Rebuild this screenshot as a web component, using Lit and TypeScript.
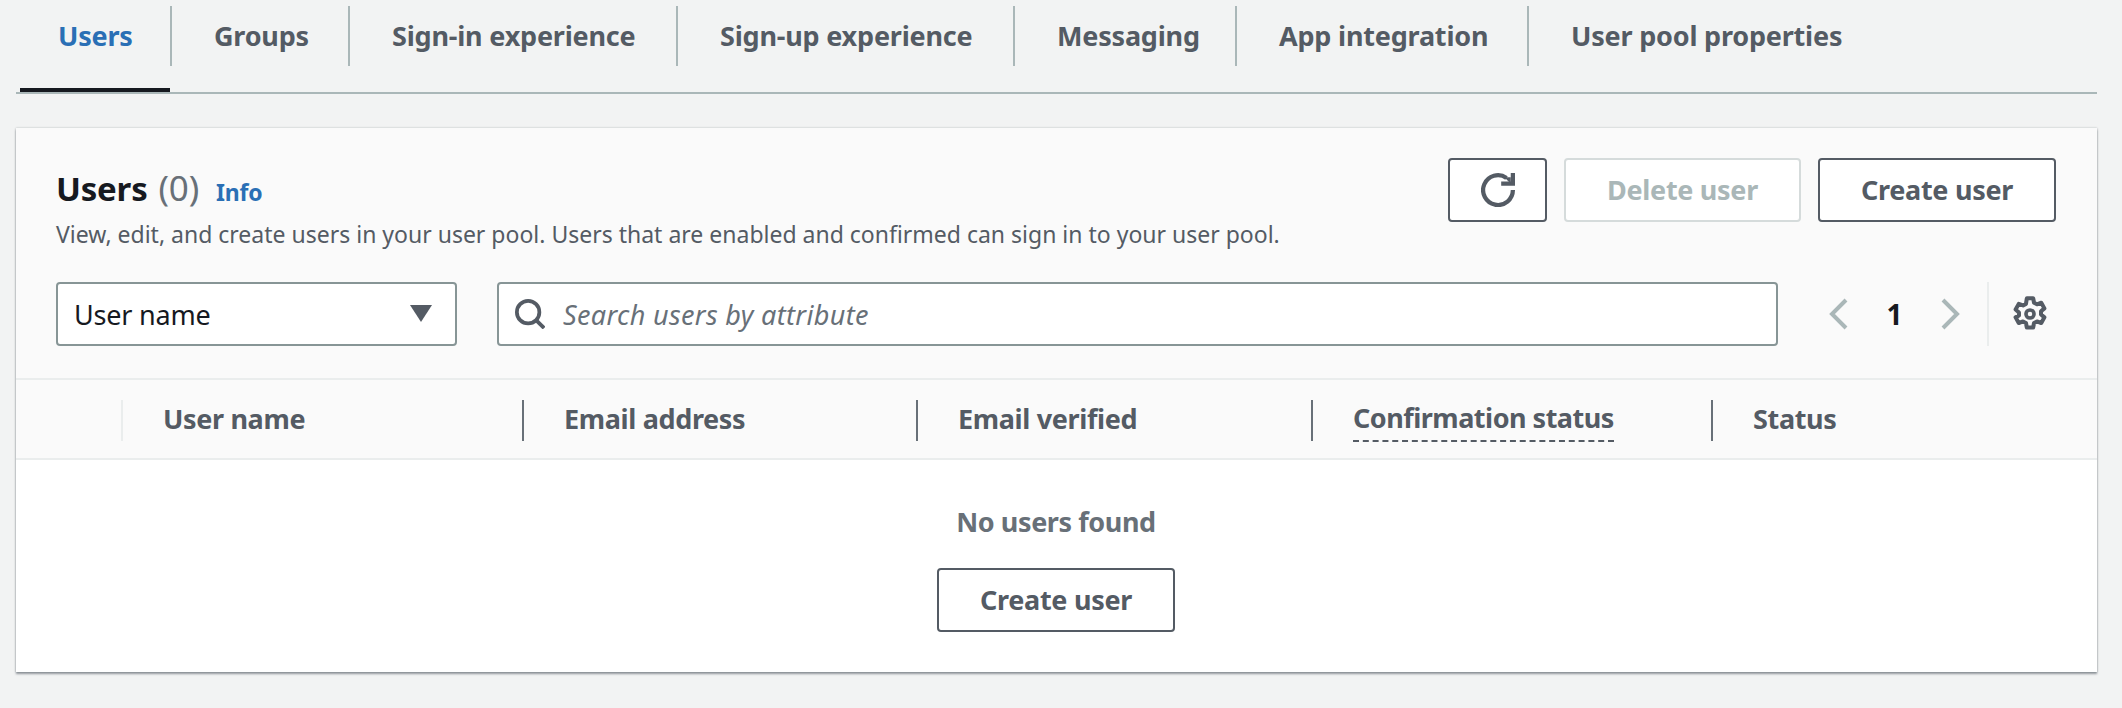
import { LitElement, html, css, svg } from 'lit'
import { customElement } from 'lit/decorators.js'

const TABS = [
    'Users',
    'Groups',
    'Sign-in experience',
    'Sign-up experience',
    'Messaging',
    'App integration',
    'User pool properties',
]

const COLUMNS = [
    'User name',
    'Email address',
    'Email verified',
    'Confirmation status',
    'Status',
]

const refreshIcon = svg`
    <path d="M15 8a7 7 0 1 1-3-5.7" fill="none" stroke="currentColor" stroke-width="2" />
    <path d="M9.500 5H15V0" fill="none" stroke="currentColor" stroke-width="2" />
    <path d="M11 2h3v3z" fill="currentColor" />
`

const searchIcon = svg`
    <circle cx="7" cy="7" r="6" fill="none" stroke="currentColor" stroke-width="2" />
    <path d="M11.500 11.500 15.500 15.500" fill="none" stroke="currentColor" stroke-width="2" />
`

const gearIcon = svg`
    <path
        d="M6.600 1h2.800l.4 2 1.300.7 1.900-.7 1.400 2.500-1.500 1.300v1.400l1.500 1.300-1.400 2.500-1.900-.7-1.300.7-.4 2H6.600l-.4-2-1.300-.7-1.900.7-1.400-2.500L3.100 8.700V7.300L1.600 6 3 3.500l1.900.7 1.300-.7z"
        fill="none"
        stroke="currentColor"
        stroke-width="1.800"
        stroke-linejoin="round"
    />
    <circle cx="8" cy="8" r="1.800" fill="none" stroke="currentColor" stroke-width="1.600" />
`

@customElement('app-root')
export class AppRoot extends LitElement {
    static get styles() {
        return css`
            :host {
                display: block;
                width: 2122px;
                height: 708px;
                overflow: hidden;
                background-color: #f2f3f3;
                font-family: 'Noto Sans', 'Open Sans', sans-serif;
                font-size: 27px;
                letter-spacing: -0.2px;
                color: #16191f;
            }

            .tabs {
                display: grid;
                grid-template-columns: 152px 178px 328px 337px 222px 292px 1fr;
                margin: 0 25px 0 16px;
                padding-left: 4px;
                height: 92px;
                border-bottom: 2px solid #aab7b8;
            }

            .tab {
                box-sizing: border-box;
                height: 92px;
                padding-top: 6px;
                border-bottom: 4px solid transparent;
            }

            .tab.active {
                margin-right: 2px;
                border-bottom-color: #16191f;
            }

            .tab-label {
                display: flex;
                align-items: center;
                box-sizing: border-box;
                height: 60px;
                padding-left: 42px;
                padding-bottom: 1px;
                border-right: 2px solid #aab7b8;
                font-weight: 700;
                color: #545b64;
                white-space: nowrap;
            }

            .tab.first .tab-label {
                margin-right: -2px;
                padding-left: 38px;
            }

            .tab.active .tab-label {
                color: #2a6fb5;
            }

            .tab.last .tab-label {
                border-right: none;
            }

            .card {
                margin: 34px 25px 0 16px;
                height: 544px;
                display: flex;
                flex-direction: column;
                background-color: #ffffff;
                box-shadow: 0 2px 2px rgba(84, 91, 100, 0.6),
                    0 0 2px rgba(0, 28, 36, 0.25);
            }

            .card-header {
                box-sizing: border-box;
                height: 252px;
                padding: 30px 41px 0 40px;
                background-color: #fafafa;
                border-bottom: 2px solid #eaeded;
            }

            .title-row {
                display: flex;
                justify-content: space-between;
                height: 64px;
            }

            .title {
                display: flex;
                align-items: baseline;
                margin-top: 10px;
                line-height: 40px;
                font-size: 33px;
                font-weight: 700;
                white-space: nowrap;
            }

            .count {
                margin-left: 11px;
                font-size: 35px;
                font-weight: 400;
                color: #687078;
            }

            .info {
                margin-left: 17px;
                font-size: 23px;
                font-weight: 700;
                color: #2a6fb5;
            }

            .description {
                margin-top: -6px;
                line-height: 36px;
                font-size: 23px;
                letter-spacing: 0;
                color: #545b64;
                white-space: nowrap;
            }

            .actions {
                display: flex;
                gap: 17px;
            }

            .btn {
                display: flex;
                align-items: center;
                justify-content: center;
                box-sizing: border-box;
                height: 64px;
                width: 238px;
                border: 2px solid #545b64;
                border-radius: 4px;
                background-color: #ffffff;
                color: #545b64;
                font: inherit;
                font-weight: 700;
                letter-spacing: -0.3px;
                padding: 0 0 2px;
            }

            .btn.icon {
                width: 99px;
                padding: 0;
            }

            .btn.icon svg {
                width: 34px;
                height: 34px;
            }

            .btn.disabled {
                width: 237px;
                border-color: #d5dbdb;
                color: #aab7b8;
            }

            .filters {
                display: flex;
                align-items: stretch;
                height: 64px;
                margin-top: 30px;
            }

            .select {
                display: flex;
                align-items: center;
                justify-content: space-between;
                box-sizing: border-box;
                width: 401px;
                padding: 0 23px 0 16px;
                background-color: #ffffff;
                border: 2px solid #879596;
                border-radius: 4px;
            }

            .caret {
                width: 0;
                height: 0;
                margin-top: -1px;
                border-left: 11px solid transparent;
                border-right: 11px solid transparent;
                border-top: 17px solid #545b64;
            }

            .search {
                display: flex;
                align-items: center;
                gap: 18px;
                box-sizing: border-box;
                width: 1281px;
                margin-left: 40px;
                padding-left: 16px;
                background-color: #ffffff;
                border: 2px solid #879596;
                border-radius: 4px;
                font-style: italic;
                letter-spacing: 0.35px;
                color: #687078;
            }

            .search svg {
                width: 30px;
                height: 30px;
                color: #545b64;
            }

            .pager {
                display: flex;
                align-items: center;
                flex: 1;
                margin-left: 50px;
            }

            .pager svg {
                width: 20px;
                height: 32px;
                color: #aab7b8;
            }

            .page {
                width: 93px;
                text-align: center;
                font-weight: 700;
                font-size: 28px;
            }

            .pager-divider {
                align-self: stretch;
                margin-left: 26px;
                border-left: 2px solid #eaeded;
            }

            .pager svg.gear {
                width: 36px;
                height: 36px;
                margin-left: 23px;
                color: #545b64;
            }

            .table-head {
                display: grid;
                grid-template-columns: 401px 394px 395px 400px 1fr;
                box-sizing: border-box;
                height: 80px;
                padding: 20px 0 19px 105px;
                background-color: #fafafa;
                border-bottom: 2px solid #eaeded;
            }

            .col {
                display: flex;
                align-items: center;
                padding-left: 40px;
                border-left: 2px solid #687078;
                font-weight: 700;
                letter-spacing: -0.35px;
                color: #545b64;
                white-space: nowrap;
            }

            .col.first {
                border-left-color: #eaeded;
            }

            .col-label {
                margin-bottom: 4px;
            }

            .col-label.dashed {
                border-bottom: 2px dashed #545b64;
                line-height: 28px;
                padding-bottom: 8px;
                margin-bottom: -4px;
                letter-spacing: -0.5px;
            }

            .empty {
                display: flex;
                flex-direction: column;
                align-items: center;
                flex: 1;
                padding-top: 42px;
                padding-right: 1px;
            }

            .empty-text {
                line-height: 40px;
                font-weight: 700;
                letter-spacing: -0.4px;
                color: #687078;
            }

            .empty .btn {
                margin-top: 26px;
            }
        `
    }

    render() {
        return html`
            <div class="tabs">
                ${TABS.map(
                    (tab, i) => html`
                        <div
                            class="tab ${i === 0 ? 'active first' : ''} ${i ===
                            TABS.length - 1
                                ? 'last'
                                : ''}"
                        >
                            <div class="tab-label">${tab}</div>
                        </div>
                    `
                )}
            </div>
            <div class="card">
                <div class="card-header">
                    <div class="title-row">
                        <div>
                            <div class="title">
                                Users<span class="count">(0)</span>
                                <span class="info">Info</span>
                            </div>
                        </div>
                        <div class="actions">
                            <button class="btn icon">
                                <svg viewBox="0 0 16 16">${refreshIcon}</svg>
                            </button>
                            <button class="btn disabled">Delete user</button>
                            <button class="btn">Create user</button>
                        </div>
                    </div>
                    <div class="description">
                        View, edit, and create users in your user pool. Users
                        that are enabled and confirmed can sign in to your user
                        pool.
                    </div>
                    <div class="filters">
                        <div class="select">
                            User name
                            <span class="caret"></span>
                        </div>
                        <div class="search">
                            <svg viewBox="0 0 16 16">${searchIcon}</svg>
                            Search users by attribute
                        </div>
                        <div class="pager">
                            <svg viewBox="0 0 10 16">
                                <path
                                    d="M9 1 2 8l7 7"
                                    fill="none"
                                    stroke="currentColor"
                                    stroke-width="2"
                                />
                            </svg>
                            <span class="page">1</span>
                            <svg viewBox="0 0 10 16">
                                <path
                                    d="m1 1 7 7-7 7"
                                    fill="none"
                                    stroke="currentColor"
                                    stroke-width="2"
                                />
                            </svg>
                            <span class="pager-divider"></span>
                            <svg class="gear" viewBox="0 0 16 16">
                                ${gearIcon}
                            </svg>
                        </div>
                    </div>
                </div>
                <div class="table-head">
                    ${COLUMNS.map(
                        (col, i) => html`
                            <div class="col ${i === 0 ? 'first' : ''}">
                                <span
                                    class="col-label ${col ===
                                    'Confirmation status'
                                        ? 'dashed'
                                        : ''}"
                                    >${col}</span
                                >
                            </div>
                        `
                    )}
                </div>
                <div class="empty">
                    <div class="empty-text">No users found</div>
                    <button class="btn">Create user</button>
                </div>
            </div>
        `
    }
}
